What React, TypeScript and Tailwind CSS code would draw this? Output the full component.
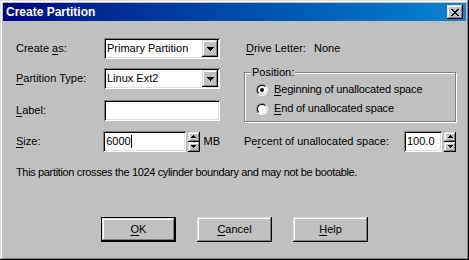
import React from 'react';

const raised =
  'shadow-[inset_-1px_-1px_0_#000,inset_1px_1px_0_#dfdfdf,inset_-2px_-2px_0_#808080,inset_2px_2px_0_#fff]';
const sunken =
  'shadow-[inset_1px_1px_0_#808080,inset_-1px_-1px_0_#fff,inset_2px_2px_0_#000,inset_-2px_-2px_0_#dfdfdf]';

function Key({ children }: { children: React.ReactNode }) {
  return <span className="underline underline-offset-[2px]">{children}</span>;
}

function DownArrow() {
  return (
    <svg width="7" height="4" viewBox="0 0 7 4" shapeRendering="crispEdges">
      <rect x="0" y="0" width="7" height="1" fill="#000" />
      <rect x="1" y="1" width="5" height="1" fill="#000" />
      <rect x="2" y="2" width="3" height="1" fill="#000" />
      <rect x="3" y="3" width="1" height="1" fill="#000" />
    </svg>
  );
}

function SmallArrow({ up }: { up?: boolean }) {
  return (
    <svg width="5" height="3" viewBox="0 0 5 3" shapeRendering="crispEdges" className={up ? '' : 'rotate-180'}>
      <rect x="2" y="0" width="1" height="1" fill="#000" />
      <rect x="1" y="1" width="3" height="1" fill="#000" />
      <rect x="0" y="2" width="5" height="1" fill="#000" />
    </svg>
  );
}

function CloseGlyph() {
  const rows = ['11000011', '01100110', '00111100', '00011000', '00111100', '01100110', '11000011'];
  return (
    <svg width="8" height="7" viewBox="0 0 8 7" shapeRendering="crispEdges">
      {rows.map((r, y) =>
        r.split('').map((c, x) => (c === '1' ? <rect key={`${x}-${y}`} x={x} y={y} width="1" height="1" fill="#000" /> : null))
      )}
    </svg>
  );
}

function Combo({ value }: { value: string }) {
  return (
    <div className={`w-[116px] h-[21px] bg-white ${sunken} flex items-center p-[2px]`}>
      <span className="flex-1 pl-[1px]">{value}</span>
      <div className={`w-[16px] h-[17px] bg-[#c0c0c0] ${raised} flex items-center justify-center`}>
        <DownArrow />
      </div>
    </div>
  );
}

function Spinner() {
  return (
    <div className="flex flex-col ml-[2px]">
      <div className={`w-[12px] h-[10px] bg-[#c0c0c0] ${raised} flex items-center justify-center`}>
        <SmallArrow up />
      </div>
      <div className={`w-[12px] h-[10px] bg-[#c0c0c0] ${raised} flex items-center justify-center`}>
        <SmallArrow />
      </div>
    </div>
  );
}

function Radio({ checked }: { checked?: boolean }) {
  return (
    <div className="w-[12px] h-[12px] rounded-full border border-t-[#808080] border-l-[#808080] border-r-white border-b-white">
      <div className="w-full h-full rounded-full border border-t-black border-l-black border-r-[#dfdfdf] border-b-[#dfdfdf] bg-white flex items-center justify-center">
        {checked && <div className="w-[4px] h-[4px] rounded-full bg-black" />}
      </div>
    </div>
  );
}

function Button({ children, isDefault }: { children: React.ReactNode; isDefault?: boolean }) {
  return (
    <div className={`w-[75px] h-[25px] ${isDefault ? 'border border-black' : ''} flex`}>
      <div className={`flex-1 bg-[#c0c0c0] ${raised} flex items-center justify-center`}>{children}</div>
    </div>
  );
}

export default function App() {
  return (
    <div className="w-[469px] h-[260px] bg-[#c0c0c0] p-[3px] flex flex-col text-black text-[11px] leading-[13px] font-[family-name:'Liberation_Sans',Arial,sans-serif] shadow-[inset_-1px_-1px_0_#000,inset_1px_1px_0_#dfdfdf,inset_-2px_-2px_0_#808080,inset_2px_2px_0_#fff]">
      {/* Title bar */}
      <div className="h-[18px] flex items-center bg-linear-to-r from-[#000080] to-[#1084d0] pl-[3px] pr-[3px]">
        <span className="flex-1 text-white font-bold text-[12px]">Create Partition</span>
        <div className={`w-[16px] h-[14px] bg-[#c0c0c0] ${raised} flex items-center justify-center pr-[1px]`}>
          <CloseGlyph />
        </div>
      </div>

      {/* Body */}
      <div className="flex-1 flex flex-col pl-[13px]">
        <div className="flex pt-[17px]">
          {/* Left column */}
          <div className="w-[204px] flex flex-col">
            <div className="h-[21px] flex items-center">
              <span className="w-[88px]">Create <Key>a</Key>s:</span>
              <Combo value="Primary Partition" />
            </div>
            <div className="h-[21px] flex items-center mt-[9px]">
              <span className="w-[88px]"><Key>P</Key>artition Type:</span>
              <Combo value="Linux Ext2" />
            </div>
            <div className="h-[21px] flex items-center mt-[11px]">
              <span className="w-[88px]"><Key>L</Key>abel:</span>
              <div className={`w-[116px] h-[21px] bg-white ${sunken}`} />
            </div>
            <div className="h-[21px] flex items-center mt-[10px]">
              <span className="w-[88px]"><Key>S</Key>ize:</span>
              <div className={`w-[83px] h-[21px] bg-white ${sunken} flex items-center pl-[3px]`}>
                <span>6000</span>
                <span className="w-[1px] h-[13px] bg-black" />
              </div>
              <Spinner />
              <span className="ml-[4px]">MB</span>
            </div>
          </div>

          {/* Right column */}
          <div className="w-[212px] ml-[24px] flex flex-col">
            <div className="h-[21px] flex items-center pl-[2px]">
              <span className="w-[68px]"><Key>D</Key>rive Letter:</span>
              <span>None</span>
            </div>
            <div className="relative mt-[13px] h-[50px] border border-[#808080] shadow-[1px_1px_0_#fff,inset_1px_1px_0_#fff] pl-[11px] pt-[10px] flex flex-col gap-[6px]">
              <span className="absolute -top-[7px] left-[6px] bg-[#c0c0c0] px-[1px]">Position:</span>
              <div className="flex items-center h-[13px] tracking-[-0.15px]">
                <Radio checked />
                <span className="ml-[6px]"><Key>B</Key>eginning of unallocated space</span>
              </div>
              <div className="flex items-center h-[13px] tracking-[-0.15px]">
                <Radio />
                <span className="ml-[6px]"><Key>E</Key>nd of unallocated space</span>
              </div>
            </div>
            <div className="h-[21px] flex items-center mt-[9px]">
              <span className="w-[160px]">Pe<Key>r</Key>cent of unallocated space:</span>
              <div className={`w-[38px] h-[21px] bg-white ${sunken} flex items-center pl-[3px]`}>100.0</div>
              <Spinner />
            </div>
          </div>
        </div>

        <p className="mt-[14px] tracking-[-0.35px]">This partition crosses the 1024 cylinder boundary and may not be bootable.</p>

        <div className="mt-[38px] flex justify-center gap-[21px] pr-[13px]">
          <Button isDefault><span><Key>O</Key>K</span></Button>
          <Button><span><Key>C</Key>ancel</span></Button>
          <Button><span><Key>H</Key>elp</span></Button>
        </div>
      </div>
    </div>
  );
}
